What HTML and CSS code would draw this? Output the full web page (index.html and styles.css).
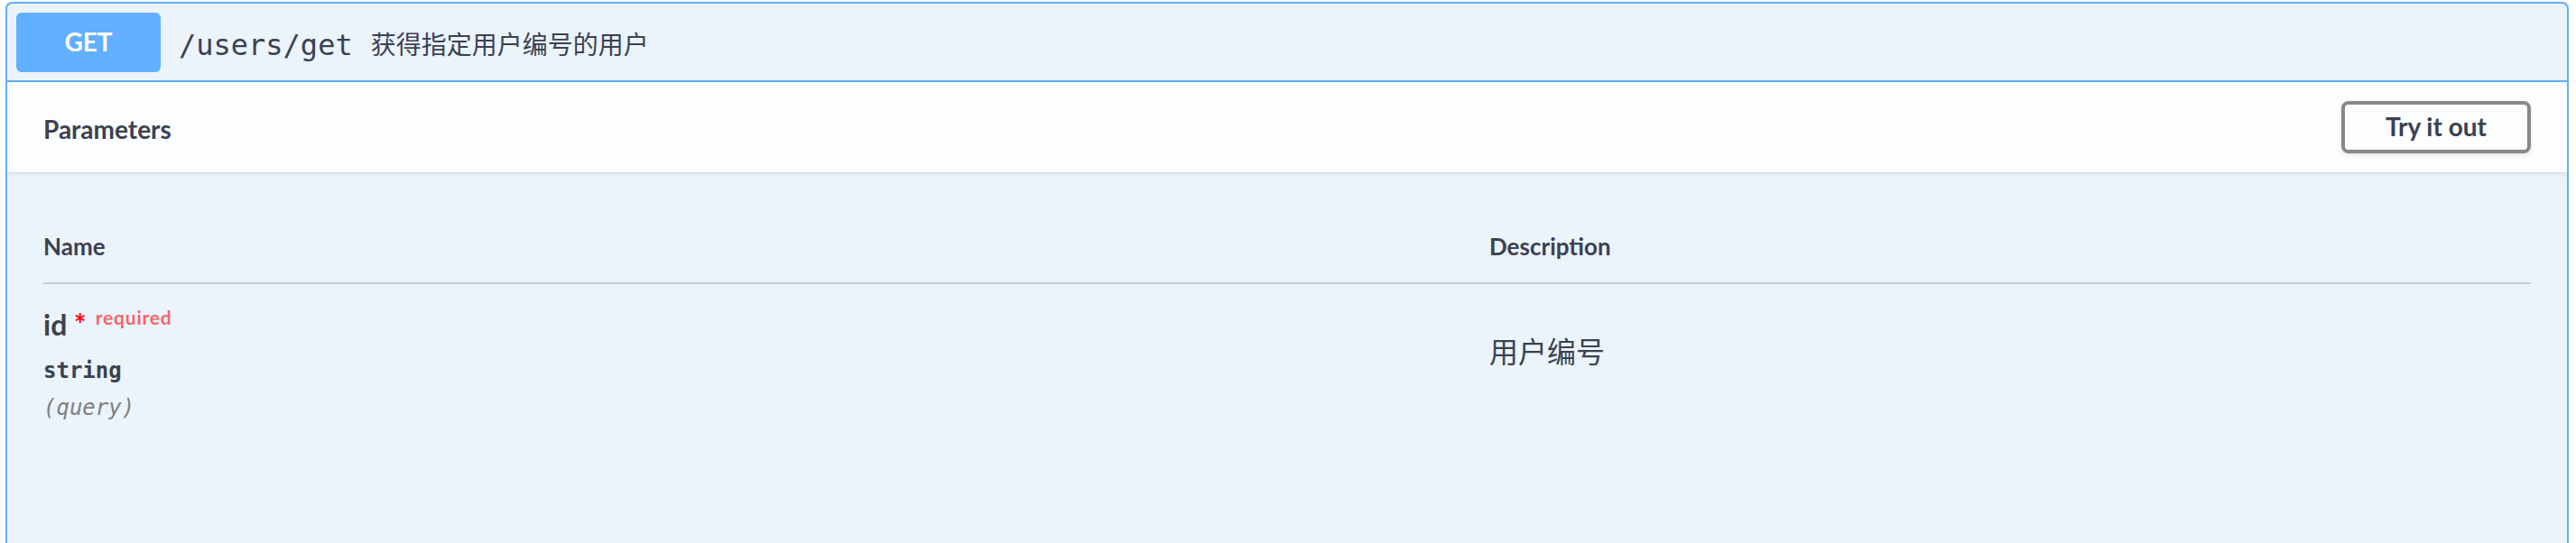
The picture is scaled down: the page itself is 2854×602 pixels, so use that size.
FILE: index.html
```html
<!DOCTYPE html>
<html lang="zh-CN">
<head>
<meta charset="utf-8">
<title>/users/get</title>
<link rel="stylesheet" href="styles.css">
</head>
<body>
  <div class="opblock">
    <div class="summary">
      <span class="method">GET</span>
      <span class="path">/users/get</span>
      <span class="summary-desc">获得指定用户编号的用户</span>
    </div>
    <div class="section-header">
      <h4 class="section-title">Parameters</h4>
      <button class="try-out">Try it out</button>
    </div>
    <div class="table-container">
      <div class="params-head">
        <div class="col-name">Name</div>
        <div class="col-desc">Description</div>
      </div>
      <div class="params-row">
        <div class="col-name">
          <div class="param-name">id<span class="star">&nbsp;*</span><span class="required">required</span></div>
          <div class="param-type">string</div>
          <div class="param-in">(query)</div>
        </div>
        <div class="col-desc param-desc">用户编号</div>
      </div>
    </div>
  </div>
</body>
</html>
```

FILE: styles.css
```css
html, body {
  background: #ffffff;
}

body {
  margin: 2px 8px 0 6px;
  font-family: "Lato", "Noto Sans CJK SC", sans-serif;
  color: #3b4151;
}

.opblock {
  border: 2px solid #61affe;
  border-radius: 8px;
  background: #ebf3fb;
  box-shadow: 0 0 6px rgba(0, 0, 0, 0.19);
  overflow: hidden;
}

.summary {
  display: flex;
  align-items: center;
  padding: 10px 10px 9px;
  border-bottom: 2px solid #61affe;
}

.method {
  display: flex;
  align-items: center;
  justify-content: center;
  width: 160px;
  height: 66px;
  border-radius: 6px;
  background: #61affe;
  color: #ffffff;
  font-family: "Lato", sans-serif;
  font-weight: 700;
  font-size: 28px;
  line-height: 1.2;
}

.path {
  padding: 6px 20px 0 20px;
  font-family: "DejaVu Sans Mono", monospace;
  font-size: 32px;
  color: #3b4151;
}

.summary-desc {
  padding-top: 2px;
  font-family: "Noto Sans CJK SC", sans-serif;
  font-size: 28px;
  color: #3b4151;
}

.section-header {
  display: flex;
  align-items: center;
  justify-content: space-between;
  height: 100px;
  padding: 0 40px;
  background: rgba(255, 255, 255, 0.8);
  box-shadow: 0 2px 4px rgba(0, 0, 0, 0.1);
  position: relative;
}

.section-title {
  margin: 0;
  padding-top: 6px;
  font-family: "Lato", sans-serif;
  font-weight: 700;
  font-size: 28px;
  line-height: 1.2;
  color: #3b4151;
}

.try-out {
  height: 58px;
  padding: 0 45px;
  border: 4px solid #888888;
  border-radius: 8px;
  background: transparent;
  box-shadow: 0 2px 4px rgba(0, 0, 0, 0.1);
  font-family: "Lato", sans-serif;
  font-weight: 700;
  font-size: 28px;
  line-height: 1.2;
  color: #3b4151;
}

.table-container {
  padding: 0 40px;
  min-height: 480px;
}

.params-head,
.params-row {
  display: grid;
  grid-template-columns: 1602px 1fr;
}

.params-head {
  padding: 66px 0 24px;
  border-bottom: 2px solid #c5ccd6;
  font-family: "Lato", sans-serif;
  font-weight: 700;
  font-size: 26px;
  line-height: 32px;
}

.params-row .col-name {
  padding-top: 25px;
}

.param-name {
  font-family: "Lato", sans-serif;
  font-weight: 700;
  font-size: 32px;
  line-height: 40px;
}

.star {
  color: #ff0000;
}

.required {
  padding-left: 10px;
  font-size: 21px;
  line-height: 0;
  letter-spacing: 0.8px;
  vertical-align: 12px;
  color: rgba(255, 0, 0, 0.6);
}

.param-type {
  margin-top: 15px;
  font-family: "DejaVu Sans Mono", monospace;
  font-weight: 700;
  font-size: 24px;
  line-height: 32px;
  color: #3b4151;
}

.param-in {
  margin-top: 9px;
  font-family: "DejaVu Sans Mono", monospace;
  font-style: italic;
  font-size: 24px;
  line-height: 32px;
  color: #808080;
}

.param-desc {
  padding-top: 53px;
  font-family: "Noto Sans CJK SC", sans-serif;
  font-size: 32px;
  line-height: 40px;
  color: #3b4151;
}
```
